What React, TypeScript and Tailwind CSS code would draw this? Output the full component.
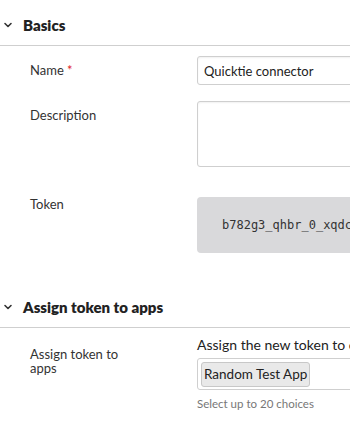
import React from "react";

const font = { fontFamily: "Lato, 'Noto Sans', sans-serif" };

function Chevron() {
  return (
    <svg width="10" height="10" viewBox="0 0 10 10" className="shrink-0">
      <path d="M2 3.5 L5 6.5 L8 3.5" fill="none" stroke="#333" strokeWidth="1.6" strokeLinecap="round" strokeLinejoin="round" />
    </svg>
  );
}

function SectionHeader({ title }: { title: string }) {
  return (
    <div className="flex h-[46px] items-center gap-[10px] border-b border-[#cfcfcf] pl-[3px] pt-[5px]">
      <Chevron />
      <h2 className="text-[15px] font-extrabold text-[#222]">{title}</h2>
    </div>
  );
}

function Row({ label, labelClass, children, className }: { label: React.ReactNode; labelClass?: string; children: React.ReactNode; className?: string }) {
  return (
    <div className={`flex ${className ?? ""}`}>
      <div className={`w-[197px] shrink-0 pl-[30px] pr-[50px] text-[13px] leading-[14px] text-[#333] ${labelClass ?? ""}`}>{label}</div>
      <div className="w-[260px] shrink-0">{children}</div>
    </div>
  );
}

export default function App() {
  return (
    <div className="h-[437px] w-[350px] overflow-hidden bg-white" style={font}>
      <SectionHeader title="Basics" />

      <Row label={<>Name <span className="text-[#e0242a]">*</span></>} labelClass="pt-[7px]" className="mt-[10px]">
        <input
          defaultValue="Quicktie connector"
          className="h-[29px] w-full rounded-[3px] border border-[#cfcfcf] px-[6px] text-[13px] text-[#222] shadow-[inset_0_1px_2px_rgba(0,0,0,0.06)] outline-none"
          style={font}
        />
      </Row>

      <Row label="Description" labelClass="pt-[7px]" className="mt-[16px]">
        <textarea className="block h-[66px] w-full resize-none rounded-[3px] border border-[#cfcfcf] shadow-[inset_0_1px_2px_rgba(0,0,0,0.06)] outline-none" />
      </Row>

      <Row label="Token" labelClass="pt-0" className="mt-[30px]">
        <div className="flex h-[56px] items-center rounded-[4px] bg-[#d9d9db] pl-[25px] text-[12px] text-[#333]" style={{ fontFamily: "'DejaVu Sans Mono', monospace" }}>
          b782g3_qhbr_0_xqdc7s9kd
        </div>
      </Row>

      <div className="mt-[29px]">
        <SectionHeader title="Assign token to apps" />
      </div>

      <Row label="Assign token to apps" labelClass="pt-[11px]" className="mt-[8px]">
        <p className="whitespace-nowrap text-[14px] leading-[18px] text-[#222]">Assign the new token to one or more apps</p>
        <div className="mt-[4px] flex h-[32px] items-center rounded-[3px] border border-[#cfcfcf] pl-[3px]">
          <span className="flex h-[25px] items-center rounded-[3px] border border-[#c8c8c8] bg-[#e9e9e9] px-[2px] text-[13.5px] text-[#222]">Random Test App</span>
        </div>
        <p className="mt-[7px] text-[11.5px] leading-[14px] text-[#777]">Select up to 20 choices</p>
      </Row>
    </div>
  );
}
